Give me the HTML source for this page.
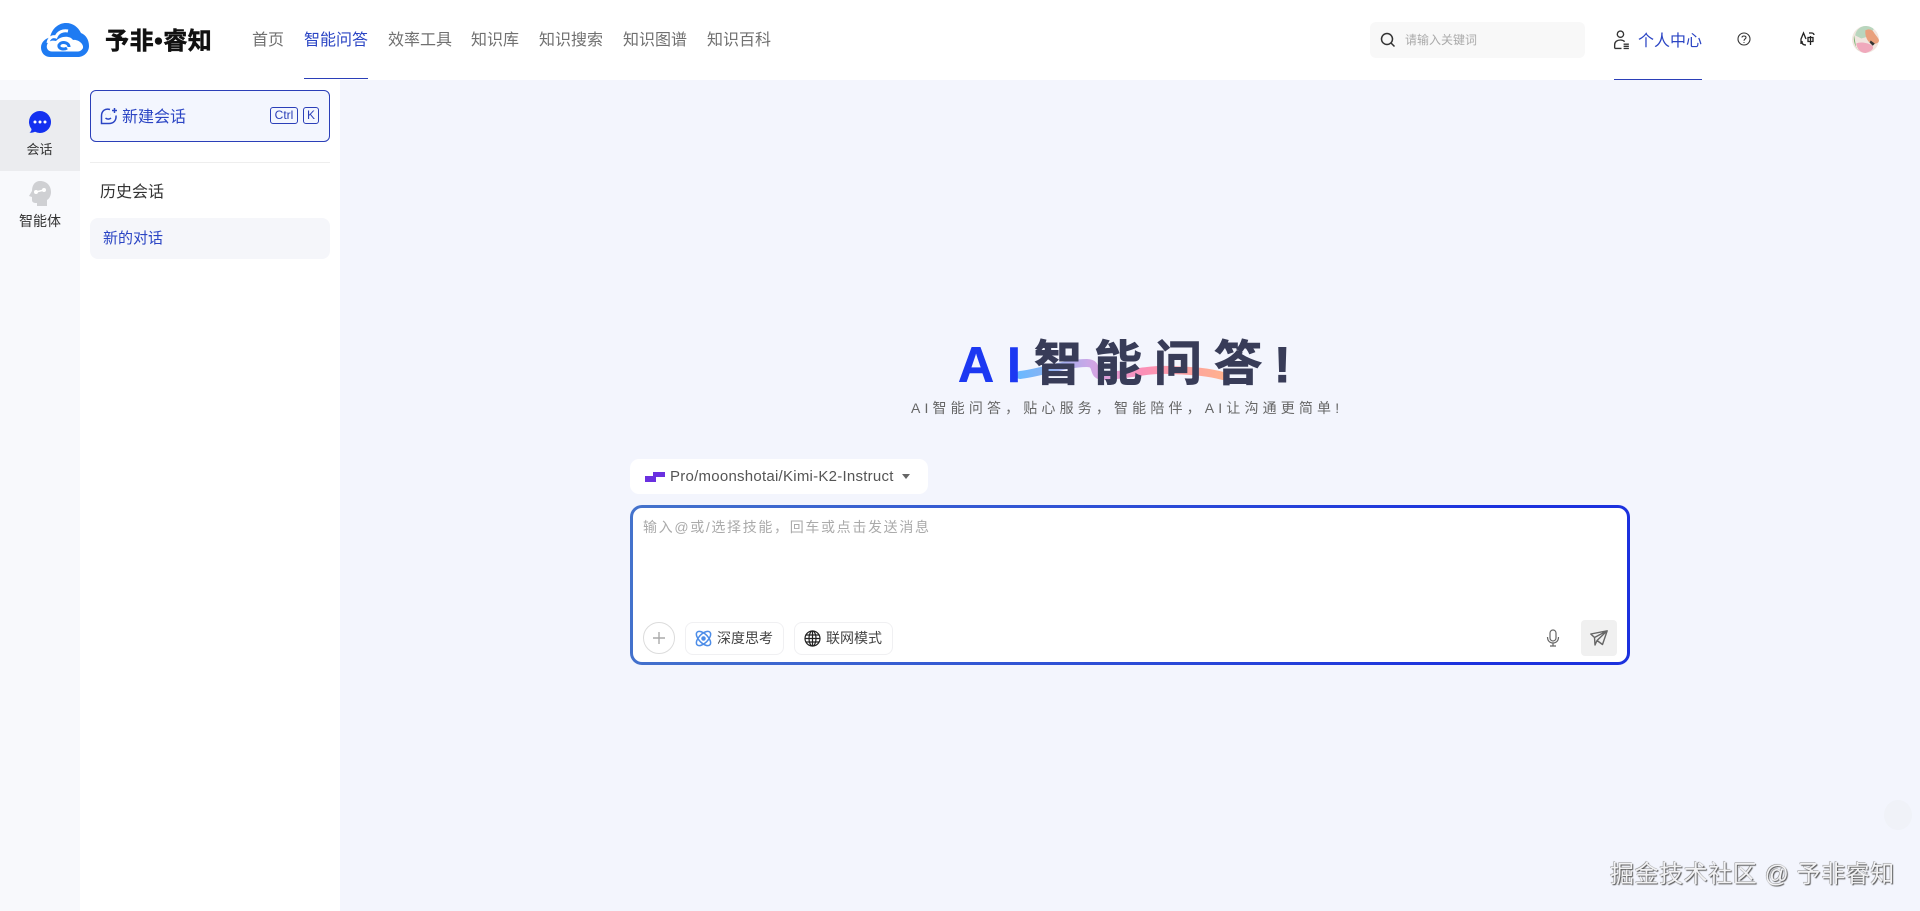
<!DOCTYPE html>
<html lang="zh"><head><meta charset="utf-8"><title>予非睿知</title>
<style>
*{box-sizing:border-box;margin:0;padding:0}
html,body{width:1920px;height:911px;overflow:hidden;background:#f3f5fd;font-family:"Liberation Sans","Noto Sans CJK SC",sans-serif}
.a{position:absolute;white-space:nowrap}
.nav{top:30px;font-size:16px;line-height:22px;color:#707070}
.kbd{border:1px solid #2b3fb8;border-radius:3px;font-size:12px;line-height:15px;height:17px;text-align:center;color:#2b3fb8;top:107px}
.tool{top:622px;height:33px;width:99px;background:#fff;border:1px solid #f0f0f2;border-radius:8px;font-size:14px;line-height:31px;color:#444;padding-left:31px}
.t{font-size:48px;font-weight:700;line-height:56px;top:337px;color:#383c58;-webkit-text-stroke:.9px #383c58}
</style></head><body>
<div class="a" style="left:0;top:0;width:1920px;height:80px;background:#fff"></div>
<svg class="a" style="left:40px;top:22px" width="50" height="36" viewBox="0 0 50 36"><path d="M10 35C4 35 1 30 1 25.500c0-5 4-9 9-10C12 6 19 1 26 1c7 0 12 4 15 10 5 2 8 7 8 13 0 6-5 11-11 11z" fill="#1f7bf2"/><path d="M8 21C9 15 13 14 16 15 18 10 23 8 28 9" fill="none" stroke="#fff" stroke-width="3"/><path d="M12 29.500C8 29.500 6 26 7 23 8 19 12 18 16 19 20 14 30 13 33 18 38 17 44 22 43 26 42 28 40 29.500 38 29.500z" fill="#fff"/><path d="M29 25C29 20 21 19 19 23 18 27 24 28 27 26" fill="none" stroke="#1f7bf2" stroke-width="3"/></svg>
<div class="a" style="left:105px;top:26px;font-size:24px;font-weight:700;line-height:32px;color:#111;letter-spacing:.6px;-webkit-text-stroke:.5px #111">予非•睿知</div>
<div class="a nav" style="left:252px">首页</div>
<div class="a nav" style="left:304px;color:#2b45c4;top:30px">智能问答</div>
<div class="a" style="left:304px;top:78px;width:64px;height:1px;background:#2b3fb8"></div>
<div class="a nav" style="left:388px">效率工具</div>
<div class="a nav" style="left:471px">知识库</div>
<div class="a nav" style="left:539px">知识搜索</div>
<div class="a nav" style="left:623px">知识图谱</div>
<div class="a nav" style="left:707px">知识百科</div>
<div class="a" style="left:1370px;top:22px;width:215px;height:36px;background:#f8f8f8;border-radius:6px"></div>
<svg class="a" style="left:1380px;top:32px" width="16" height="16" viewBox="0 0 16 16" fill="none" stroke="#333" stroke-width="1.500"><circle cx="7" cy="7" r="5.500"/><path d="M11 11l3.500 3.500"/></svg>
<div class="a" style="left:1405px;top:32px;font-size:12px;line-height:17px;color:#aaa">请输入关键词</div>
<svg class="a" style="left:1613px;top:30px" width="17" height="20" viewBox="0 0 16 19" fill="none" stroke="#333" stroke-width="1.300"><circle cx="7" cy="4" r="3"/><path d="M1.500 17.500V14c0-3 2.500-4.500 5.500-4.500 2 0 3 .5 4 1.500M1.500 17.500H8M10 13.500h5M10 15.500h5M10 17.500h5"/></svg>
<div class="a" style="left:1638px;top:31px;font-size:16px;line-height:22px;color:#2b45c4">个人中心</div>
<div class="a" style="left:1614px;top:79px;width:88px;height:1px;background:#2b3fb8"></div>
<svg class="a" style="left:1737px;top:32px" width="14" height="14" viewBox="0 0 14 14" fill="none" stroke="#333" stroke-width="1.100"><circle cx="7" cy="7" r="6"/><path d="M5 5.500C5 3.500 9 3.500 9 5.500 9 7 7 7 7 8.800M7 10v.9"/></svg>
<svg class="a" style="left:1800px;top:31px" width="15" height="16" viewBox="0 0 15 16" fill="none" stroke="#222" stroke-width="1.300"><path d="M1 13V8L3.500 2 6 8M2 10c0 3 1 4 4 4M9 2h3c1 0 2 1 2 2M8 6.500h5v4H8zM10.500 5v9"/></svg>
<svg class="a" style="left:1851px;top:25px" width="29" height="29" viewBox="0 0 28 28"><circle cx="14" cy="14" r="13" fill="#f1e6df"/><path d="M4 10C5 4 10 1 14 1c3 0 6 1 8 3l-5 7-7 2z" fill="#b9d6be"/><path d="M14 5c4-2 7 0 8 2s5 6 5 8-3 4-7 3-7-8-6-13z" fill="#e9a07c"/><path d="M5 18c3-2 10-1 14 1s3 6-5 8c-5 0-8-4-9-9z" fill="#f0a9bc"/><path d="M19 15l4 3-2 2-3-3z" fill="#333"/><path d="M3 10l2 12 3 3c-4-3-6-10-5-15z" fill="#75b06e"/></svg>

<div class="a" style="left:0;top:80px;width:80px;height:831px;background:#f8f9fc"></div>
<div class="a" style="left:0;top:100px;width:80px;height:71px;background:#ebecef"></div>
<svg class="a" style="left:28px;top:110px" width="24" height="24" viewBox="0 0 24 24"><path d="M12 1a11 11 0 1 1-5 20.800C5.500 22.500 3.500 23 1.500 22.500 3 21.500 3.500 20.500 3.500 19A11 11 0 0 1 12 1z" fill="#1330f0"/><circle cx="7" cy="12" r="1.500" fill="#fff"/><circle cx="12" cy="12" r="1.500" fill="#fff"/><circle cx="17" cy="12" r="1.500" fill="#fff"/></svg>
<div class="a" style="left:26.500px;top:141px;font-size:13px;line-height:18px;color:#333">会话</div>
<svg class="a" style="left:28px;top:181px" width="24" height="25" viewBox="0 0 24 25"><path d="M12 0c7 0 11 5 11 11 0 4-2 7-4 8v6H9v-3c-2 0-5 0-5-3v-3l-3-1 3-5C4 4 7 0 12 0z" fill="#cfd0d3"/><circle cx="8" cy="11" r="2" fill="#fff"/><circle cx="16" cy="9" r="2" fill="#fff"/><path d="M8 11l8-2" stroke="#fff" stroke-width="1.500"/></svg>
<div class="a" style="left:19px;top:212px;font-size:14px;line-height:18px;color:#333">智能体</div>

<div class="a" style="left:80px;top:80px;width:260px;height:831px;background:#fff"></div>
<div class="a" style="left:90px;top:90px;width:240px;height:52px;background:#f3f6fe;border:1px solid #2b3fb8;border-radius:6px"></div>
<svg class="a" style="left:100px;top:107px" width="18" height="18" viewBox="0 0 18 18" fill="none" stroke="#2b45c4" stroke-width="1.500"><path d="M10 2.500C5 1 1.500 4 1.500 9v7.500H9c4.500 0 7.500-3 7-8M5.500 7.500h.1M10 7.500h.1M5.500 11c1.500 1.500 4 1.500 5.500 0M14.500 1v5M12 3.500h5"/></svg>
<div class="a" style="left:122px;top:107px;font-size:16px;line-height:22px;color:#2b45c4">新建会话</div>
<div class="a kbd" style="left:270px;width:28px">Ctrl</div>
<div class="a kbd" style="left:303px;width:16px">K</div>
<div class="a" style="left:90px;top:162px;width:240px;height:1px;background:#eee"></div>
<div class="a" style="left:100px;top:182px;font-size:16px;line-height:22px;color:#333">历史会话</div>
<div class="a" style="left:90px;top:218px;width:240px;height:41px;background:#f5f6fa;border-radius:8px"></div>
<div class="a" style="left:103px;top:228px;font-size:15px;line-height:21px;color:#2b45c4">新的对话</div>

<svg class="a" style="left:1015px;top:355px" width="215" height="30" viewBox="0 0 215 30" fill="none"><defs><linearGradient id="g" x1="0" x2="1" y1="0" y2="0"><stop offset="0" stop-color="#6bb8ff"/><stop offset=".15" stop-color="#8fb2f0"/><stop offset=".35" stop-color="#cfa6e6"/><stop offset=".6" stop-color="#fb8fb8"/><stop offset="1" stop-color="#ffb18e"/></linearGradient></defs><path d="M5 20C25 18 50 8 72 8 85 8 75 22 90 21 115 20 130 14 155 15 175 16 190 16 208 21" stroke="url(#g)" stroke-width="8" stroke-linecap="round"/></svg>
<div class="a t" style="left:958px;color:#1c38f2;-webkit-text-stroke:.5px #1c38f2;font-size:50px">A</div>
<div class="a t" style="left:1007px;color:#1c38f2;-webkit-text-stroke:.5px #1c38f2;font-size:50px">I</div>
<div class="a t" style="left:1034px">智</div>
<div class="a t" style="left:1094px">能</div>
<div class="a t" style="left:1154px">问</div>
<div class="a t" style="left:1214px">答</div>
<div class="a t" style="left:1274px;font-size:50px">!</div>
<div class="a" style="left:911px;top:398px;font-size:14px;line-height:20px;letter-spacing:4.150px;color:#666">AI智能问答&#65292;贴心服务&#65292;智能陪伴&#65292;AI让沟通更简单!</div>

<div class="a" style="left:630px;top:459px;width:298px;height:35px;background:#fff;border-radius:9px"></div>
<svg class="a" style="left:645px;top:472px" width="20" height="10" viewBox="0 0 20 10"><path d="M0 4h8V0h12v5H11v5H0z" fill="#6a30e0"/></svg>
<div class="a" style="left:670px;top:467px;font-size:15px;line-height:20px;letter-spacing:.25px;color:#555">Pro/moonshotai/Kimi-K2-Instruct</div>
<svg class="a" style="left:901px;top:474px" width="10" height="6"><path d="M1 0h8L5 5z" fill="#666"/></svg>

<div class="a" style="left:630px;top:505px;width:1000px;height:160px;border-radius:12px;background:linear-gradient(100deg,#4473cc,#1b31de 85%)"></div>
<div class="a" style="left:633px;top:508px;width:994px;height:154px;border-radius:9px;background:#fff"></div>
<div class="a" style="left:643px;top:517px;font-size:14px;line-height:20px;letter-spacing:1.660px;color:#aaa">输入@或/选择技能&#65292;回车或点击发送消息</div>
<div class="a" style="left:643px;top:622px;width:32px;height:32px;border:1px solid #dcdcdc;border-radius:50%"></div>
<svg class="a" style="left:652px;top:631px" width="14" height="14" stroke="#aaa" stroke-width="1.400"><path d="M7 1v12M1 7h12"/></svg>
<div class="a tool" style="left:685px">深度思考</div>
<svg class="a" style="left:695px;top:630px" width="17" height="17" viewBox="0 0 17 17" fill="none" stroke="#4d8de8" stroke-width="1.500"><ellipse cx="8.500" cy="8.500" rx="4.500" ry="9" transform="rotate(45 8.500 8.500)"/><ellipse cx="8.500" cy="8.500" rx="4.500" ry="9" transform="rotate(-45 8.500 8.500)"/><circle cx="8.500" cy="8.500" r="1.500" fill="#4d8de8"/></svg>
<div class="a tool" style="left:794px">联网模式</div>
<svg class="a" style="left:804px;top:630px" width="17" height="17" viewBox="0 0 17 17" fill="none" stroke="#222" stroke-width="1.200"><circle cx="8.500" cy="8.500" r="7.500"/><ellipse cx="8.500" cy="8.500" rx="3.500" ry="7.500"/><path d="M1 8.500h15M2 5h13M2 12h13M8.500 1v15"/></svg>
<svg class="a" style="left:1546px;top:629px" width="14" height="18" viewBox="0 0 14 18" fill="none" stroke="#666" stroke-width="1.200"><rect x="4" y="1" width="6" height="11" rx="3"/><path d="M1.500 8c0 4 2.500 6 5.500 6s5.500-2 5.500-6M7 14v3M4 17h6"/></svg>
<div class="a" style="left:1581px;top:620px;width:36px;height:36px;background:#f0f0f0;border-radius:4px"></div>
<svg class="a" style="left:1590px;top:630px" width="18" height="16" viewBox="0 0 18 16" fill="none" stroke="#666" stroke-width="1.400" stroke-linejoin="round"><path d="M.8 4L17.200.8 12.500 14.500 7 10.500 5 15 4.500 7.500zM4.500 7.500L17.200.8 7 10.500"/></svg>

<div class="a" style="left:1884px;top:800px;width:28px;height:30px;border-radius:50%;background:#f0f2f8"></div>
<div class="a" style="left:1610px;top:860px;font-size:24px;line-height:30px;letter-spacing:.55px;color:#f2f2f4;text-shadow:1px 1px 1px #555,-.5px -.5px .5px #888">掘金技术社区 @ 予非睿知</div>
</body></html>
